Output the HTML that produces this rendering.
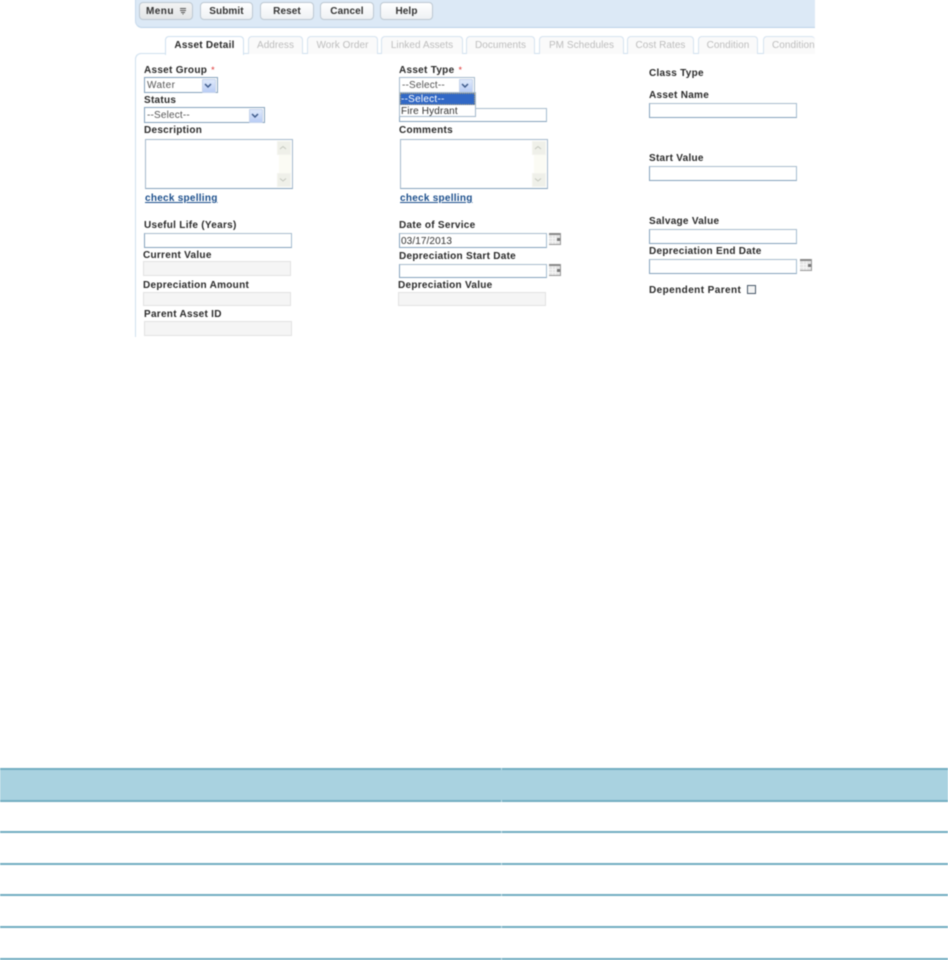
<!DOCTYPE html>
<html>
<head>
<meta charset="utf-8">
<style>
html,body{margin:0;padding:0;background:#fff;width:948px;height:960px;overflow:hidden}
body{position:relative;font-family:"Liberation Sans",Arial,sans-serif;color:#222}
.a,.l,.t,.b,.i,.d,.s,.ta,.r{position:absolute;box-sizing:border-box}
.wrap{position:absolute;left:0;top:0;width:948px;height:960px;filter:blur(.4px)}
.l{font:bold 10px/12px "Liberation Sans",Arial,sans-serif;letter-spacing:.28px;color:#2a2a2a;white-space:nowrap}
.l i{color:#d33;font-style:normal;font-weight:normal;font-size:9px;margin-left:1px}
.b{top:2px;height:18px;border:1px solid #bdc8d2;border-radius:4px;background:linear-gradient(#fff,#eef1f4);font:bold 10px/18px "Liberation Sans",Arial,sans-serif;letter-spacing:.1px;text-align:center;color:#333}
.t{top:36px;height:18px;border:1px solid #d5e3f0;border-bottom:0;border-radius:4px 4px 0 0;background:#fafafa;font:10px/17px "Liberation Sans",Arial,sans-serif;letter-spacing:.05px;text-align:center;color:#bdbdbd;white-space:nowrap;overflow:hidden}
.i{height:15px;background:#fff;border:1px solid #86a3bd;border-top-color:#a9bccd;border-right-color:#a5bcd0;font:10px/15px "Liberation Sans",Arial,sans-serif;letter-spacing:.1px;padding-left:1px;color:#333}
.d{height:15px;background:#f5f5f5;border:1px solid #e2e2e2}
.s{height:16px;background:#fff;border:1px solid #86a3bd;font:10px/15px "Liberation Sans",Arial,sans-serif;letter-spacing:.18px;padding-left:2px;color:#555}
.s u{position:absolute;right:1px;top:1px;width:12px;height:12px;background:linear-gradient(#dfe9fb,#b9cdf5);border:1px solid #c6d4ec;border-radius:1px;text-decoration:none}
.s u svg{position:absolute;left:1px;top:3px}
.ta{height:50px;background:#fff;border:1px solid #a5b9cc;border-bottom-color:#86a3bd}
.ta b{position:absolute;right:1px;top:1px;bottom:1px;width:12px;background:#fbfbf4}
.ta em{position:absolute;right:1px;width:12px;height:12px;background:#eff0e9;border:1px solid #f3f4ee}
.ta em svg{position:absolute;left:1px;top:3px}
.k{position:absolute;font:bold 10px/12px "Liberation Sans",Arial,sans-serif;letter-spacing:.26px;color:#1c4f8c;text-decoration:underline;white-space:nowrap}
.c{position:absolute;width:12px;height:12px}
.r{left:0;width:948px;height:2px;background:#72aec2}
</style>
</head>
<body>
<div class="wrap">
  <!-- toolbar -->
  <div class="a" style="left:135px;top:-4px;width:680px;height:32px;background:#dce9f6;border-left:1px solid #c6d9ec;border-bottom:1px solid #bcd3e8;border-radius:0 0 0 7px"></div>
  <div class="b" style="left:139px;width:54px;background:linear-gradient(#f3f3f3,#e3e5e7);text-align:left;padding-left:6px;letter-spacing:.45px">Menu<svg style="position:absolute;left:39px;top:5px" width="8" height="7"><path d="M1 .5h6M1 2.500h6M2 4.500h4M3.500 6h1" stroke="#555" fill="none"/></svg></div>
  <div class="b" style="left:200px;width:53px">Submit</div>
  <div class="b" style="left:260px;width:54px">Reset</div>
  <div class="b" style="left:320px;width:54px">Cancel</div>
  <div class="b" style="left:380px;width:53px">Help</div>

  <!-- tab panel border -->
  <div class="a" style="left:135px;top:53px;width:680px;height:284px;border-top:1px solid #cfe0ef;border-left:1px solid #cfe0ef;border-radius:6px 0 0 0"></div>
  <div class="t" style="left:165px;width:79px;background:#fff;color:#2a2a2a;font-weight:bold;letter-spacing:.25px;border-color:#cfe0ef;height:19px">Asset Detail</div>
  <div class="t" style="left:248px;width:55px">Address</div>
  <div class="t" style="left:307px;width:71px">Work Order</div>
  <div class="t" style="left:381px;width:82px">Linked Assets</div>
  <div class="t" style="left:466px;width:69px">Documents</div>
  <div class="t" style="left:539px;width:85px">PM Schedules</div>
  <div class="t" style="left:627px;width:67px">Cost Rates</div>
  <div class="t" style="left:698px;width:60px">Condition</div>
  <div class="t" style="left:763px;width:52px;border-right:0;text-align:left;padding-left:8px">Condition</div>

  <!-- column 1 -->
  <div class="l" style="left:144px;top:64px">Asset Group <i>*</i></div>
  <div class="s" style="left:144px;top:77px;width:74px;letter-spacing:.4px">Water<u><svg width="8" height="6"><path d="M1 1l3 3 3-3" fill="none" stroke="#3d5a8a" stroke-width="1.5"/></svg></u></div>
  <div class="l" style="left:144px;top:95px">Status</div>
  <div class="s" style="left:144px;top:107px;width:121px">--Select--<u><svg width="8" height="6"><path d="M1 1l3 3 3-3" fill="none" stroke="#3d5a8a" stroke-width="1.5"/></svg></u></div>
  <div class="l" style="left:144px;top:125px">Description</div>
  <div class="ta" style="left:145px;top:139px;width:148px"><b></b><em style="top:1px"><svg width="8" height="6"><path d="M1 4l3-2.500 3 2.500" fill="none" stroke="#c6c8c0"/></svg></em><em style="bottom:1px"><svg width="8" height="6"><path d="M1 1.500l3 2.500 3-2.500" fill="none" stroke="#c6c8c0"/></svg></em></div>
  <a class="k" style="left:145px;top:193px">check spelling</a>
  <div class="l" style="left:144px;top:220px">Useful Life (Years)</div>
  <div class="i" style="left:144px;top:233px;width:148px"></div>
  <div class="l" style="left:143px;top:250px">Current Value</div>
  <div class="d" style="left:143px;top:261px;width:148px"></div>
  <div class="l" style="left:143px;top:280px">Depreciation Amount</div>
  <div class="d" style="left:143px;top:292px;width:148px;height:14px"></div>
  <div class="l" style="left:144px;top:309px">Parent Asset ID</div>
  <div class="d" style="left:144px;top:321px;width:148px"></div>

  <!-- column 2 -->
  <div class="l" style="left:399px;top:64px">Asset Type <i>*</i></div>
  <div class="i" style="left:399px;top:108px;width:148px;height:14px"></div>
  <div class="s" style="left:399px;top:77px;width:76px;border-color:#a5b9cc">--Select--<u><svg width="8" height="6"><path d="M1 1l3 3 3-3" fill="none" stroke="#3d5a8a" stroke-width="1.5"/></svg></u></div>
  <div class="a" style="left:399px;top:92px;width:77px;height:25px;background:#fff;border:1px solid #a5b9cc">
    <div style="height:12px;background:#3168c6;outline:1px dotted #b5a06a;outline-offset:-1px;color:#fff;font:10px/13px 'Liberation Sans',Arial,sans-serif;letter-spacing:.25px;padding-left:1px">--Select--</div>
    <div style="height:11px;color:#333;font:10px/13px 'Liberation Sans',Arial,sans-serif;letter-spacing:.15px;padding-left:1px">Fire Hydrant</div>
  </div>
  <div class="l" style="left:399px;top:125px">Comments</div>
  <div class="ta" style="left:400px;top:139px;width:148px"><b></b><em style="top:1px"><svg width="8" height="6"><path d="M1 4l3-2.500 3 2.500" fill="none" stroke="#c6c8c0"/></svg></em><em style="bottom:1px"><svg width="8" height="6"><path d="M1 1.500l3 2.500 3-2.500" fill="none" stroke="#c6c8c0"/></svg></em></div>
  <a class="k" style="left:400px;top:193px">check spelling</a>
  <div class="l" style="left:399px;top:220px">Date of Service</div>
  <div class="i" style="left:399px;top:233px;width:148px">03/17/2013</div>
  <svg class="c" style="left:549px;top:233px" viewBox="0 0 12 12"><rect width="12" height="12" fill="#e4e4e4"/><rect width="12" height="2" fill="#888"/><path d="M0 5.500h12M0 8.500h12M3.500 2v10M6.500 2v10" stroke="#f6f6f6"/><rect x="8" y="5" width="3" height="3" fill="#777"/><path d="M11.500 0v12M0 11.500h12" stroke="#999"/></svg>
  <div class="l" style="left:399px;top:251px">Depreciation Start Date</div>
  <div class="i" style="left:399px;top:264px;width:148px;height:14px"></div>
  <svg class="c" style="left:549px;top:264px" viewBox="0 0 12 12"><rect width="12" height="12" fill="#e4e4e4"/><rect width="12" height="2" fill="#888"/><path d="M0 5.500h12M0 8.500h12M3.500 2v10M6.500 2v10" stroke="#f6f6f6"/><rect x="8" y="5" width="3" height="3" fill="#777"/><path d="M11.500 0v12M0 11.500h12" stroke="#999"/></svg>
  <div class="l" style="left:398px;top:280px">Depreciation Value</div>
  <div class="d" style="left:398px;top:292px;width:148px;height:14px"></div>

  <!-- column 3 -->
  <div class="l" style="left:649px;top:68px">Class Type</div>
  <div class="l" style="left:649px;top:90px">Asset Name</div>
  <div class="i" style="left:649px;top:103px;width:148px"></div>
  <div class="l" style="left:649px;top:153px">Start Value</div>
  <div class="i" style="left:649px;top:166px;width:148px"></div>
  <div class="l" style="left:649px;top:216px">Salvage Value</div>
  <div class="i" style="left:649px;top:229px;width:148px"></div>
  <div class="l" style="left:649px;top:246px">Depreciation End Date</div>
  <div class="i" style="left:649px;top:259px;width:148px"></div>
  <svg class="c" style="left:799.500px;top:259px" viewBox="0 0 12 12"><rect width="12" height="12" fill="#e4e4e4"/><rect width="12" height="2" fill="#888"/><path d="M0 5.500h12M0 8.500h12M3.500 2v10M6.500 2v10" stroke="#f6f6f6"/><rect x="8" y="5" width="3" height="3" fill="#777"/><path d="M11.500 0v12M0 11.500h12" stroke="#999"/></svg>
  <div class="l" style="left:649px;top:285px;letter-spacing:.42px">Dependent Parent</div>
  <div class="a" style="left:747px;top:285px;width:9px;height:9px;background:#f4f4f4;border:1px solid #4a5a6a"></div>

  <!-- table -->
  <div class="a" style="left:0;top:769px;width:948px;height:32px;background:#a9d2e0"></div>
  <div class="r" style="top:768px"></div>
  <div class="r" style="top:800px"></div>
  <div class="r" style="top:831px"></div>
  <div class="r" style="top:863px"></div>
  <div class="r" style="top:894px"></div>
  <div class="r" style="top:926px"></div>
  <div class="r" style="top:958px"></div>
  <div class="a" style="left:501px;top:768px;width:1px;height:192px;background:linear-gradient(#bcd9e4,#bcd9e4) 0 0/1px 2px no-repeat,linear-gradient(#bcd9e4,#bcd9e4) 0 32px/1px 2px no-repeat,linear-gradient(#bcd9e4,#bcd9e4) 0 63px/1px 2px no-repeat,linear-gradient(#bcd9e4,#bcd9e4) 0 95px/1px 2px no-repeat,linear-gradient(#bcd9e4,#bcd9e4) 0 126px/1px 2px no-repeat,linear-gradient(#bcd9e4,#bcd9e4) 0 158px/1px 2px no-repeat,linear-gradient(#bcd9e4,#bcd9e4) 0 190px/1px 2px no-repeat"></div>
</div>
</body>
</html>
